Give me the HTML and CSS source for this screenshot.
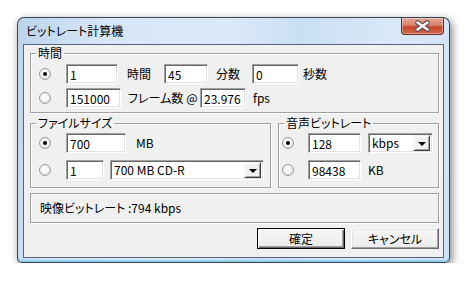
FILE: index.html
```html
<!DOCTYPE html>
<html lang="ja">
<head>
    <meta charset="UTF-8">
    <title>ビットレート計算機</title>
    <link rel="stylesheet" href="styles.css">
</head>
<body>
    <div class="window">
        <div class="titlebar">
            <span class="title">ビットレート計算機</span>
            <div class="close">
                <svg width="43" height="17" viewBox="0 0 43 17">
                    <path d="M16.5 5.5 L26.5 12.5 M26.5 5.5 L16.5 12.5" stroke="#5a4a48" stroke-width="4.6" stroke-linecap="round" fill="none"/>
                    <path d="M16.5 5.5 L26.5 12.5 M26.5 5.5 L16.5 12.5" stroke="#fff" stroke-width="2.4" stroke-linecap="round" fill="none"/>
                </svg>
            </div>
        </div>
        <div class="client">
            <fieldset class="group g-time">
                <legend>時間</legend>
                <div class="row">
                    <div class="rcell"><span class="radio on"></span></div>
                    <input class="edit" style="width:52px" value="1">
                    <span class="lbl" style="width:46px;padding-left:9px">時間</span>
                    <input class="edit" style="width:44px" value="45">
                    <span class="lbl" style="width:44px;padding-left:8px">分数</span>
                    <input class="edit" style="width:47px" value="0">
                    <span class="lbl" style="padding-left:4px">秒数</span>
                </div>
                <div class="row">
                    <div class="rcell"><span class="radio"></span></div>
                    <input class="edit" style="width:55px" value="151000">
                    <span class="lbl" style="width:79px;padding-left:7px">フレーム数<span class="at">@</span></span>
                    <input class="edit" style="width:46px" value="23.976">
                    <span class="lbl" style="padding-left:7px">fps</span>
                </div>
            </fieldset>

            <div class="pair">
                <fieldset class="group g-size">
                    <legend>ファイルサイズ</legend>
                    <div class="row">
                        <div class="rcell"><span class="radio on"></span></div>
                        <input class="edit" style="width:60px" value="700">
                        <span class="lbl" style="padding-left:10px">MB</span>
                    </div>
                    <div class="row">
                        <div class="rcell"><span class="radio"></span></div>
                        <input class="edit" style="width:38px" value="1">
                        <div class="combo" style="width:154px;margin-left:6px">
                            <span class="ctext">700 MB CD-R</span>
                            <span class="drop"></span>
                        </div>
                    </div>
                </fieldset>
                <fieldset class="group g-audio">
                    <legend>音声ビットレート</legend>
                    <div class="row">
                        <div class="rcell small"><span class="radio on"></span></div>
                        <input class="edit" style="width:53px" value="128">
                        <div class="combo" style="width:65px;margin-left:7px">
                            <span class="ctext">kbps</span>
                            <span class="drop"></span>
                        </div>
                    </div>
                    <div class="row">
                        <div class="rcell small"><span class="radio"></span></div>
                        <input class="edit" style="width:53px" value="98438">
                        <span class="lbl" style="padding-left:7px">KB</span>
                    </div>
                </fieldset>
            </div>

            <div class="info">映像ビットレート :794 kbps</div>

            <div class="buttons">
                <button class="btn default">確定</button>
                <button class="btn">キャンセル</button>
            </div>
        </div>
    </div>
</body>
</html>
```

FILE: styles.css
```css
* { margin:0; padding:0; box-sizing: border-box;}
body {
    background: #fff;
    font-family: "Noto Sans CJK JP", sans-serif;
    font-size: 12px;
    color: #000;
    font-feature-settings: "palt";
}
.window {
    margin: 17px 0 0 17px;
    width: 433px;
    height: 246px;
    border: 1px solid rgba(30,40,55,.85);
    border-radius: 7px 7px 5px 5px;
    padding: 0 5px 4px;
    background: linear-gradient(100deg, #bcd3ec 0%, #d6e6f7 18%, #dbe9f8 45%, #cadff4 60%, #d9e8f7 80%, #cfe1f4 100%);
    box-shadow: 2px 3px 9px rgba(0,0,0,.5), inset 0 -2px 0 #8fd0ef;
}
.titlebar {
    height: 26px;
    display: flex;
    justify-content: space-between;
    align-items: flex-start;
}
.title {
    padding: 6px 0 0 3px;
    line-height: 14px;
    color: #000;
}
.close {
    width: 43px;
    height: 17px;
    border: 1px solid #6b2a22;
    border-top: none;
    border-radius: 0 0 4px 4px;
    background: linear-gradient(#e9a99a, #d7816c 45%, #c4472c 55%, #cf6a4c);
    box-shadow: inset 0 0 0 1px rgba(255,255,255,.35);
}
.close svg { display: block; margin: -1px 0 0 -1px; }
.client {
    width: 421px;
    height: 214px;
    border: 1px solid #56677b;
    background: #f0f0f0;
    padding: 1px 4px 0 6px;
}
.group {
    border: 1px solid #a0a0a0;
    box-shadow: 1px 1px 0 #fff, inset 1px 1px 0 #fff;
    padding: 4px 0 4px 0;
}
.group legend {
    margin-left: 5px;
    padding: 0 2px;
    line-height: 14px;
}
.row {
    display: flex;
    align-items: center;
    height: 20px;
}
.g-time .row + .row { margin-top: 4px; }
.g-size, .g-audio { padding: 3px 0 7px 0; }
.g-size .row + .row, .g-audio .row + .row { margin-top: 7px; }
.pair {
    display: flex;
    gap: 7px;
    margin-top: 3px;
}
.g-size { width: 241px; }
.g-audio { width: 161px; }
.rcell {
    width: 35px;
    padding-left: 8px;
    display: flex;
}
.rcell.small { width: 29px; padding-left: 3px; }
.radio {
    width: 12px;
    height: 12px;
    border-radius: 50%;
    border: 1px solid #9a9a9a;
    background: radial-gradient(circle at 45% 40%, #fff 0%, #f4f4f4 40%, #d4d4d4 100%);
    display: flex;
    align-items: center;
    justify-content: center;
}
.radio.on::after {
    content: "";
    width: 4px;
    height: 4px;
    border-radius: 50%;
    background: #000;
}
.edit {
    height: 20px;
    border: 1px solid;
    border-color: #a0a0a0 #fff #fff #a0a0a0;
    box-shadow: inset 1px 1px 0 #696969, inset -1px -1px 0 #e3e3e3;
    background: #fff;
    font: inherit;
    padding: 0 3px;
    line-height: 18px;
    outline: none;
}
.lbl {
    line-height: 14px;
    white-space: nowrap;
}
.lbl .at { margin-left: 3px; }
.combo {
    height: 20px;
    border: 1px solid;
    border-color: #a0a0a0 #fff #fff #a0a0a0;
    box-shadow: inset 1px 1px 0 #696969, inset -1px -1px 0 #e3e3e3;
    background: #fff;
    display: flex;
    align-items: center;
    padding: 2px 2px 2px 3px;
}
.ctext { flex: 1; line-height: 14px; }
.drop {
    width: 17px;
    height: 16px;
    border: 1px solid;
    border-color: #f0f0f0 #404040 #404040 #f0f0f0;
    box-shadow: inset 1px 1px 0 #fff, inset -1px -1px 0 #a0a0a0;
    background: #f0f0f0;
    display: flex;
    align-items: center;
    justify-content: center;
}
.drop::after {
    content: "";
    border-left: 4px solid transparent;
    border-right: 4px solid transparent;
    border-top: 4px solid #000;
    margin-top: 1px;
}
.info {
    margin-top: 5px;
    height: 30px;
    border: 1px solid #a0a0a0;
    box-shadow: 1px 1px 0 #fff, inset 1px 1px 0 #fff;
    padding-left: 9px;
    line-height: 28px;
}
.buttons {
    margin-top: 5px;
    display: flex;
    justify-content: flex-end;
    gap: 6px;
}
.btn {
    width: 88px;
    height: 21px;
    font: inherit;
    line-height: 14px;
    background: linear-gradient(#f6f6f6, #ebebeb);
    border: 1px solid;
    border-color: #fff #696969 #696969 #fff;
    box-shadow: inset -1px -1px 0 #a0a0a0, inset 1px 1px 0 #e3e3e3;
    color: #000;
}
.btn.default {
    border: 1px solid #000;
    box-shadow: inset 1px 1px 0 #fff, inset -1px -1px 0 #696969, inset -2px -2px 0 #a0a0a0;
}
```
